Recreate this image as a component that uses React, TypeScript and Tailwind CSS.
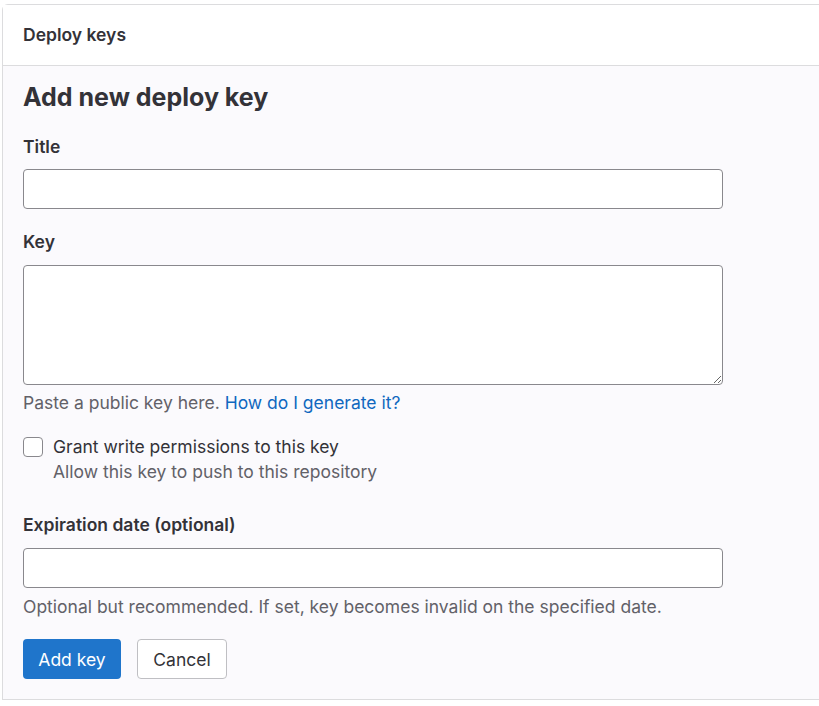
import React from 'react'

export default function App() {
  return (
    <div
      className="min-h-screen bg-white pl-[2px] pt-[4px] text-[#333238]"
      style={{ fontFamily: 'Inter, "Noto Sans", sans-serif' }}
    >
      <div className="w-[830px] rounded-tl-[6px] border-l border-t border-b border-[#dcdcde]">
        <div className="flex h-[61px] items-center border-b border-[#dcdcde] bg-white pl-[20px]">
          <h2 className="text-[17.5px] font-semibold leading-none">Deploy keys</h2>
        </div>

        <div className="bg-[#fbfafd] pl-[20px] pb-[20px] text-[17.5px] leading-[25px]">
          <h3 className="pt-[16px] text-[25px] font-bold leading-[30px]">Add new deploy key</h3>

          <div className="w-[700px]">
            <label className="mt-[22px] block font-semibold">Title</label>
            <input
              type="text"
              className="mt-[10px] block h-[40px] w-full rounded-[4px] border border-[#89888d] bg-white px-3"
            />

            <label className="mt-[20px] block font-semibold">Key</label>
            <textarea className="mt-[11px] block h-[120px] w-full rounded-[4px] border border-[#89888d] bg-white px-3 py-2" />
            <p className="mt-[5px] text-[#626168]">
              Paste a public key here.{' '}
              <a className="text-[#1068bf]" href="#">
                How do I generate it?
              </a>
            </p>

            <div className="mt-[19px] flex gap-[10px]">
              <input
                type="checkbox"
                className="mt-[3px] h-[20px] w-[20px] shrink-0 appearance-none rounded-[4px] border border-[#89888d] bg-white"
              />
              <div>
                <div>Grant write permissions to this key</div>
                <div className="text-[#626168]">Allow this key to push to this repository</div>
              </div>
            </div>

            <label className="mt-[28px] block font-semibold">Expiration date (optional)</label>
            <input
              type="text"
              className="mt-[11px] block h-[40px] w-full rounded-[4px] border border-[#89888d] bg-white px-3"
            />
            <p className="mt-[6px] text-[#626168]">
              Optional but recommended. If set, key becomes invalid on the specified date.
            </p>
          </div>

          <div className="mt-[20px] flex gap-[16px]">
            <button className="h-[40px] w-[98px] rounded-[4px] bg-[#1f75cb] text-white">Add key</button>
            <button className="h-[40px] w-[90px] rounded-[4px] border border-[#bfbfc3] bg-white text-[#333238]">
              Cancel
            </button>
          </div>
        </div>
      </div>
    </div>
  )
}
